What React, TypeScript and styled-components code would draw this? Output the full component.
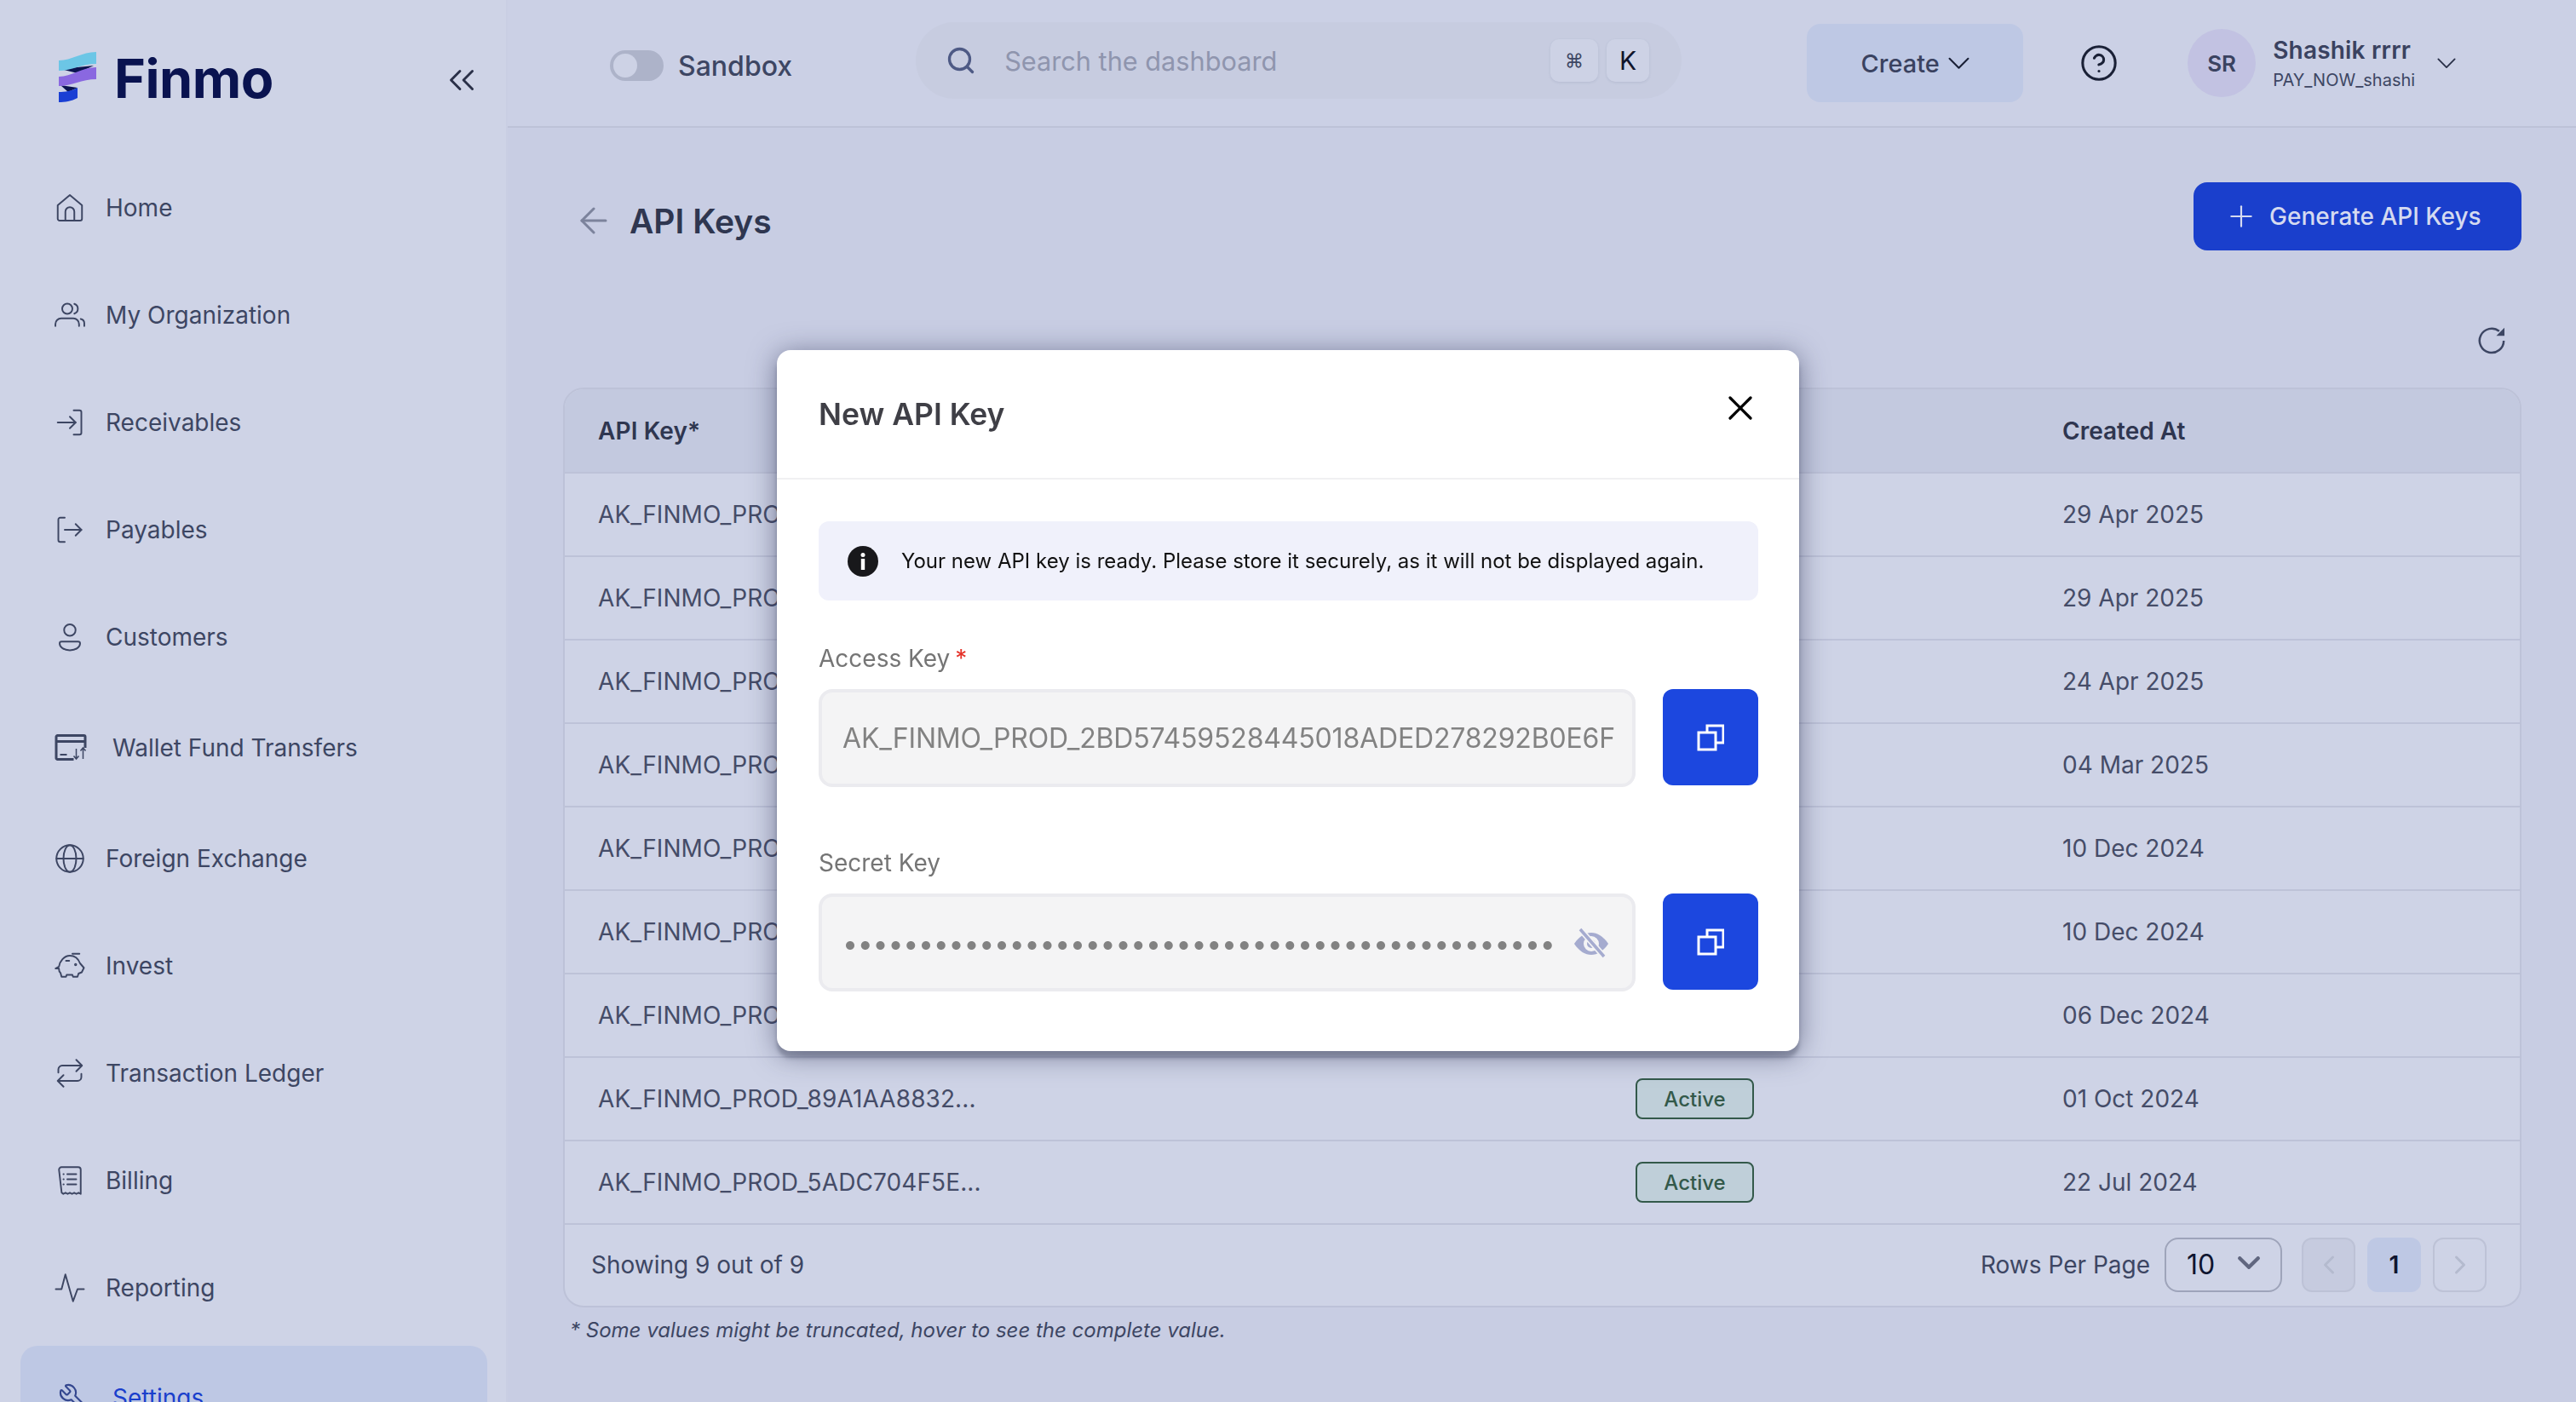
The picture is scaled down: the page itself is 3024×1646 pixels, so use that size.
import React from "react";
import styled, { createGlobalStyle } from "styled-components";
import { ArrowLeft, ChevronLeft, ChevronRight, ChevronsLeft, CircleHelp, Plus, Search, Wrench, X } from "lucide-react";

const GlobalStyle = createGlobalStyle`
  html, body {
    margin: 0;
    padding: 0;
    height: 100%;
    overflow: hidden;
    font-family: Inter, "Liberation Sans", sans-serif;
  }
  * {
    box-sizing: border-box;
  }
`;

const Page = styled.div`
  display: flex;
  width: 3024px;
  height: 1646px;
  overflow: hidden;
  background: #c8cde3;
  color: #3d4663;
`;

const Sidebar = styled.aside`
  flex: 0 0 596px;
  height: 1646px;
  overflow: hidden;
  background: #ced3e6;
  border-right: 2px solid #c9cee3;
`;

const LogoRow = styled.div`
  display: flex;
  align-items: center;
  height: 181px;
  padding: 0 27px 0 60px;
`;

const LogoText = styled.span`
  margin: 2px 0 0 4px;
  font-size: 63px;
  font-weight: 700;
  letter-spacing: -0.5px;
  color: #0a1350;
`;

const CollapseButton = styled.span`
  display: flex;
  margin: 6px 0 0 auto;
  color: #2a3048;
`;

const Nav = styled.nav`
  display: flex;
  flex-direction: column;
`;

const NavItem = styled.div<{ $active?: boolean; $tall?: boolean }>`
  display: flex;
  flex: none;
  align-items: center;
  gap: 24px;
  width: 548px;
  height: ${({ $active, $tall }) => ($active ? "122px" : $tall ? "134px" : "126px")};
  margin: ${({ $active }) => ($active ? "5px" : "0")} 0 0 24px;
  padding-left: 40px;
  border-radius: 20px;
  font-size: 28px;
  background: ${({ $active }) => ($active ? "#bec8e4" : "transparent")};
  color: ${({ $active }) => ($active ? "#1a3fcc" : "#3d4663")};
`;

const NavSvg = styled.svg.attrs({
  viewBox: "0 0 24 24",
  fill: "none",
  stroke: "currentColor",
  strokeWidth: 1.3,
  strokeLinecap: "round",
  strokeLinejoin: "round",
})`
  flex: none;
  width: 36px;
  height: 36px;
  color: #3d4663;
`;

const WalletSvg = styled.svg.attrs({ viewBox: "0 0 43 32", fill: "none", stroke: "currentColor" })`
  flex: none;
  width: 44px;
  height: 32px;
  color: #3d4663;
`;

const SettingsIcon = styled(Wrench)`
  flex: none;
  width: 44px;
  height: 36px;
  color: #34478f;
  transform: scaleX(-1);
`;

const Main = styled.main`
  display: flex;
  flex: 1;
  flex-direction: column;
  min-width: 0;
`;

const Header = styled.header`
  display: flex;
  flex: none;
  align-items: center;
  height: 150px;
  padding-left: 120px;
  background: #cbd0e5;
  border-bottom: 2px solid #bdc2d8;
`;

const SandboxToggle = styled.div`
  display: flex;
  align-items: center;
  gap: 17px;
  margin-top: 6px;
  font-size: 32px;
  font-weight: 500;
`;

const ToggleTrack = styled.span`
  display: flex;
  align-items: center;
  width: 63px;
  height: 36px;
  padding-left: 4px;
  border-radius: 18px;
  background: #adb3c9;
`;

const ToggleKnob = styled.span`
  width: 28px;
  height: 28px;
  border-radius: 50%;
  background: #cdd2e5;
`;

const SearchBox = styled.div`
  display: flex;
  align-items: center;
  width: 899px;
  height: 90px;
  margin: 0 0 6px 145px;
  padding: 0 38px 0 35px;
  border-radius: 45px;
  background: #c7cce0;
  color: #4e5a85;
`;

const Placeholder = styled.span`
  margin-left: 33px;
  font-size: 30.7px;
  color: #8f95ae;
`;

const KeyCap = styled.kbd<{ $wide?: boolean }>`
  display: flex;
  align-items: center;
  justify-content: center;
  width: ${({ $wide }) => ($wide ? "56px" : "50px")};
  height: 50px;
  margin-left: ${({ $wide }) => ($wide ? "auto" : "10px")};
  border-radius: 10px;
  background: #cdd2e5;
  box-shadow: 0 1px 3px rgba(60, 70, 110, 0.12);
  font-family: Inter, "DejaVu Sans", sans-serif;
  font-size: ${({ $wide }) => ($wide ? "22px" : "30px")};
  color: ${({ $wide }) => ($wide ? "#3d4663" : "#11152b")};
`;

const CreateButton = styled.button`
  display: flex;
  align-items: center;
  justify-content: center;
  gap: 10px;
  width: 254px;
  height: 92px;
  margin-left: 147px;
  border: none;
  border-radius: 16px;
  background: #bec8e4;
  font: inherit;
  font-size: 29px;
  font-weight: 500;
  color: #3a4260;
`;

const CreateCaret = styled.span`
  display: flex;
  color: #1a2036;
`;

const HelpButton = styled.span`
  display: flex;
  margin-left: 66px;
  color: #1a2036;
`;

const Avatar = styled.span`
  display: flex;
  align-items: center;
  justify-content: center;
  width: 80px;
  height: 80px;
  margin-left: 81px;
  border-radius: 50%;
  background: #c2c2e2;
  font-size: 26px;
  font-weight: 600;
  color: #3a4260;
`;

const UserBlock = styled.div`
  display: flex;
  flex-direction: column;
  gap: 5px;
  margin-left: 20px;
`;

const UserName = styled.span`
  font-size: 28px;
  font-weight: 600;
  line-height: 34px;
  letter-spacing: 0.2px;
  color: #3a4260;
`;

const UserOrg = styled.span`
  font-size: 20px;
  line-height: 26px;
  color: #3d4663;
`;

const UserCaret = styled.span`
  display: flex;
  margin-left: 26px;
  color: #2a3048;
`;

const Caret = styled.svg.attrs({
  viewBox: "0 0 24 14",
  fill: "none",
  stroke: "currentColor",
  strokeLinecap: "round",
  strokeLinejoin: "round",
})<{ $w: number }>`
  width: ${({ $w }) => $w}px;
  height: ${({ $w }) => Math.round(($w * 14) / 24)}px;
`;

const Content = styled.section`
  display: flex;
  flex: 1;
  flex-direction: column;
  padding: 64px 64px 0 65px;
`;

const TitleRow = styled.div`
  display: flex;
  align-items: center;
  justify-content: space-between;
`;

const TitleGroup = styled.div`
  display: flex;
  align-items: center;
  gap: 18px;
  margin: 10px 0 0 12px;
  color: #7c839c;
`;

const Title = styled.h1`
  margin: 0;
  font-size: 39px;
  font-weight: 600;
  color: #2f3650;
`;

const GenerateButton = styled.button`
  display: flex;
  align-items: center;
  gap: 13px;
  width: 385px;
  height: 80px;
  padding: 0 0 0 36px;
  border: none;
  border-radius: 16px;
  background: #1a3fcc;
  font: inherit;
  font-size: 28px;
  font-weight: 500;
  color: #d5daf0;
`;

const RefreshRow = styled.div`
  display: flex;
  justify-content: flex-end;
  margin-top: 86px;
  padding-right: 15px;
  color: #3d4663;
`;

const Table = styled.div`
  margin-top: 35px;
  overflow: hidden;
  border: 2px solid #bdc2d8;
  border-radius: 24px;
  background: #ced3e6;
`;

const columns = "1257px 501px 1fr";

const HeadRow = styled.div`
  display: grid;
  grid-template-columns: ${columns};
  align-items: center;
  height: 99px;
  background: #c3c9df;
  border-bottom: 2px solid #bdc2d8;
  font-size: 28px;
  font-weight: 600;
  color: #2f3650;
`;

const Row = styled.div`
  display: grid;
  grid-template-columns: ${columns};
  align-items: center;
  height: 98px;
  border-bottom: 2px solid #bdc2d8;
  font-size: 28px;
  color: #454c68;
`;

const KeyCell = styled.div`
  padding-left: 39px;
  letter-spacing: 0.1px;
`;

const Badge = styled.span`
  display: inline-flex;
  align-items: center;
  justify-content: center;
  width: 139px;
  height: 48px;
  border: 2px solid #33594a;
  border-radius: 8px;
  background: #bfcfd9;
  font-size: 24px;
  font-weight: 500;
  color: #33594a;
`;

const TableFooter = styled.div`
  display: flex;
  align-items: center;
  justify-content: space-between;
  height: 95px;
  padding: 0 39px 2px 31px;
  font-size: 28px;
  color: #3d4663;
`;

const FooterRight = styled.div`
  display: flex;
  align-items: center;
`;

const SelectBox = styled.div`
  display: flex;
  align-items: center;
  justify-content: space-between;
  width: 138px;
  height: 64px;
  margin-left: 17px;
  padding: 0 24px;
  border: 2px solid #9ea4ba;
  border-radius: 16px;
  font-size: 32px;
  color: #0f1530;
`;

const SelectCaret = styled.span`
  display: flex;
  margin-bottom: 4px;
  color: #60667f;
`;

const PageButton = styled.span<{ $current?: boolean; $muted?: boolean }>`
  display: flex;
  align-items: center;
  justify-content: center;
  width: 63px;
  height: 64px;
  border: 2px solid ${({ $current }) => ($current ? "transparent" : "#bdc2d6")};
  border-radius: 12px;
  background: ${({ $current, $muted }) => ($current ? "#bec8e4" : $muted ? "#c6cbdf" : "transparent")};
  font-weight: 600;
  color: ${({ $current }) => ($current ? "#0f1530" : "#b4bace")};
`;

const Pager = styled.div`
  display: flex;
  gap: 14px;
  margin-left: 23px;
`;

const Footnote = styled.p`
  margin: 12px 0 0 8px;
  font-size: 24px;
  font-style: italic;
  color: #3d4663;
`;

const Overlay = styled.div`
  position: fixed;
  inset: 0;
  display: flex;
  align-items: center;
  justify-content: center;
  padding-bottom: 1px;
`;

const Modal = styled.div`
  width: 1200px;
  height: 823px;
  border-radius: 16px;
  background: #fff;
  box-shadow: 0 8px 4px rgba(60, 65, 90, 0.35), 0 4px 32px rgba(40, 45, 80, 0.55);
`;

const ModalHeader = styled.div`
  display: flex;
  align-items: center;
  justify-content: space-between;
  height: 152px;
  padding: 0 45px 0 49px;
  border-bottom: 2px solid #f0f0f2;
`;

const ModalTitle = styled.h2`
  margin: 0;
  font-size: 35.5px;
  font-weight: 600;
  color: #3f3f46;
`;

const CloseButton = styled.span`
  display: flex;
  margin-bottom: 14px;
  color: #000;
`;

const ModalBody = styled.div`
  padding: 49px 48px 0 49px;
`;

const InfoBox = styled.div`
  display: flex;
  align-items: center;
  gap: 27px;
  height: 93px;
  margin-bottom: 51px;
  padding-left: 34px;
  border-radius: 12px;
  background: #f0f1fb;
  font-size: 24px;
  white-space: nowrap;
  color: #111;
`;

const Field = styled.div`
  margin-bottom: 72px;
`;

const FieldLabel = styled.label`
  display: block;
  height: 34px;
  margin-bottom: 19px;
  font-size: 28px;
  line-height: 34px;
  color: #757575;
`;

const Required = styled.span`
  margin-left: 6px;
  color: #e5332a;
`;

const FieldRow = styled.div`
  display: flex;
  align-items: flex-start;
  gap: 32px;
`;

const ValueBox = styled.div`
  display: flex;
  flex: 1;
  align-items: center;
  justify-content: space-between;
  height: 115px;
  padding: 0 26px 0 24px;
  overflow: hidden;
  border: 4px solid #ebebef;
  border-radius: 16px;
  background: #f4f4f5;
  font-size: 32px;
  letter-spacing: -0.17px;
  white-space: nowrap;
  color: #828282;
`;

const Dots = styled.span`
  margin-top: 2px;
  letter-spacing: -0.2px;
`;

const CopyButton = styled.button`
  display: flex;
  align-items: center;
  justify-content: center;
  flex: none;
  width: 112px;
  height: 113px;
  border: none;
  border-radius: 12px;
  background: #1c47df;
  color: #fff;
`;

const navItems = [
  { label: "Home", icon: <NavSvg><path d="M2.500 10 12 2l9.500 8v10.500a1.500 1.500 0 0 1-1.500 1.500H4a1.500 1.500 0 0 1-1.500-1.500z" /><path d="M8.500 22v-7a3.500 3.500 0 0 1 7 0v7" /></NavSvg> },
  { label: "My Organization", icon: <NavSvg><circle cx="10" cy="7" r="4" /><path d="M15.500 3.200a4 4 0 0 1 0 7.600" /><path d="M.7 20.500V19a4.500 4.500 0 0 1 4.500-4.500h9.500a4.500 4.500 0 0 1 4.500 4.500v1.500" /><path d="M20.500 15a3.500 3.500 0 0 1 2.800 3.500v2" /></NavSvg> },
  { label: "Receivables", icon: <NavSvg><path d="M2.500 12h14" /><path d="M12 7.500l4.500 4.500-4.500 4.500" /><path d="M15 2.500h4.500a1.500 1.500 0 0 1 1.500 1.500v16a1.500 1.500 0 0 1-1.500 1.500H15" /></NavSvg> },
  { label: "Payables", icon: <NavSvg><path d="M8 2.500H4.500A1.500 1.500 0 0 0 3 4v16a1.500 1.500 0 0 0 1.500 1.500H8" /><path d="M8 12h13" /><path d="M16.500 7.500 21 12l-4.500 4.500" /></NavSvg> },
  { label: "Customers", icon: <NavSvg strokeWidth={1.5}><circle cx="12" cy="6.500" r="4.500" /><path d="M5.500 15.500h13a1.500 1.500 0 0 1 1.500 1.500c0 3-3.500 5.300-8 5.300S4 20 4 17a1.500 1.500 0 0 1 1.500-1.500z" /></NavSvg> },
  {
    label: "Wallet Fund Transfers",
    tall: true,
    icon: (
      <WalletSvg>
        <path d="M22 29.500H3a1.500 1.500 0 0 1-1.500-1.500V3A1.500 1.500 0 0 1 3 1.500h31a1.500 1.500 0 0 1 1.500 1.500v13" strokeWidth="3" />
        <path d="M2 8.500h33" strokeWidth="3" />
        <path d="M6 24h8" strokeWidth="2" />
        <path d="M25 17v12M22 25.500l3 3.500 3-3.500M33 29V16M30 19.500l3-3.500 3 3.500" strokeWidth="1.500" />
      </WalletSvg>
    ),
  },
  { label: "Foreign Exchange", icon: <NavSvg><circle cx="12" cy="12" r="10.500" /><ellipse cx="12" cy="12" rx="5" ry="10.500" /><path d="M1.500 12h21" /></NavSvg> },
  { label: "Invest", icon: <NavSvg strokeWidth={1.4} color="#22283f"><path d="M.8 14l2.700-1.500C4 8.500 7.500 4 12 4c3.500 0 6.500 2 8 6l3 3.500-1.700 3.500-2.500 1-.8 2.500h-3.500l-.5-1.500H9.500L9 20.500H5.500L4.700 17.500c-1-.8-1.300-2-1.300-3.500z" /><path d="M9 8h2.500M14 2.500h5.500" /><circle cx="16.500" cy="11" r=".5" /></NavSvg> },
  { label: "Transaction Ledger", icon: <NavSvg><path d="M3 11.500V9a3 3 0 0 1 3-3h15" /><path d="M17 1.500 21.500 6 17 10.500" /><path d="M21 12.500V15a3 3 0 0 1-3 3H3" /><path d="M7 22.500 2.500 18 7 13.500" /></NavSvg> },
  { label: "Billing", icon: <NavSvg><path d="M3.500 3.500a2 2 0 0 1 2-2h13a2 2 0 0 1 2 2v19l-1.700-1-1.700 1-1.700-1-1.700 1-1.700-1-1.700 1-1.700-1-1.700 1-1.300-1z" /><path d="M10 7h7M10 11h7M10 15h7M7 7h.2M7 11h.2M7 15h.2" /></NavSvg> },
  { label: "Reporting", icon: <NavSvg><path d="M1 13h4.500L8.500 1.500l6 21 3.500-9.500h5" /></NavSvg> },
  { label: "Settings", active: true, icon: <SettingsIcon strokeWidth={1.4} /> },
];

const rows = [
  { key: "AK_FINMO_PROD_...", date: "29 Apr 2025" },
  { key: "AK_FINMO_PROD_...", date: "29 Apr 2025" },
  { key: "AK_FINMO_PROD_...", date: "24 Apr 2025" },
  { key: "AK_FINMO_PROD_...", date: "04 Mar 2025" },
  { key: "AK_FINMO_PROD_...", date: "10 Dec 2024" },
  { key: "AK_FINMO_PROD_...", date: "10 Dec 2024" },
  { key: "AK_FINMO_PROD_...", date: "06 Dec 2024" },
  { key: "AK_FINMO_PROD_89A1AA8832...", date: "01 Oct 2024" },
  { key: "AK_FINMO_PROD_5ADC704F5E...", date: "22 Jul 2024" },
];

const LogoMark = () => (
  <svg width="70" height="75" viewBox="0 0 70 75">
    <path d="M11 28 50 24 31 33z" fill="#0b1450" />
    <path d="M11 47 31 50 20 55z" fill="#0b1450" />
    <path d="M9 18C24 18 36 8 53 8V22C36 22 24 30 9 30z" fill="#6cc6e6" />
    <path d="M9 37C24 37 36 26 53 26V40C36 40 24 48 9 48z" fill="#8a68e0" />
    <path d="M9 55C16 55 24 54 31 50V62C24 66 16 67 9 67z" fill="#1a3fd4" />
  </svg>
);

const CopyIcon = () => (
  <svg width="32" height="32" viewBox="0 0 32 32" fill="none" stroke="currentColor" strokeWidth="3">
    <path d="M12 10V2h19v20h-9" />
    <rect x="2" y="10" width="20" height="20" />
  </svg>
);

const EyeOffIcon = () => (
  <svg width="44" height="36" viewBox="0 0 44 36">
    <path d="M2 19C8 10 15 6 22 6s14 4 20 13c-6 9-13 13-20 13S8 28 2 19z" fill="#a5abcf" />
    <circle cx="22" cy="19" r="7" fill="none" stroke="#f4f4f5" strokeWidth="4" />
    <path d="M9 2l28 32" stroke="#f4f4f5" strokeWidth="7" />
    <path d="M9 2l28 32" stroke="#a5abcf" strokeWidth="3.500" />
  </svg>
);

const InfoIcon = () => (
  <svg width="36" height="36" viewBox="0 0 36 36" style={{ flex: "none" }}>
    <circle cx="18" cy="18" r="18" fill="#18181b" />
    <circle cx="18" cy="10.500" r="2.500" fill="#fff" />
    <rect x="15.800" y="15" width="4.400" height="13" fill="#fff" />
  </svg>
);

const RefreshIcon = () => (
  <svg width="40" height="40" viewBox="0 0 24 24" fill="none" stroke="currentColor" strokeWidth="1.500">
    <path d="M20.500 12a8.500 8.500 0 1 1-3.200-6.700" />
    <path d="M21 2.800V8.500h-5.700z" fill="currentColor" stroke="none" />
  </svg>
);

const App: React.FC = () => {
  return (
    <Page>
      <GlobalStyle />
      <Sidebar>
        <LogoRow>
          <LogoMark />
          <LogoText>Finmo</LogoText>
          <CollapseButton>
            <ChevronsLeft size={50} strokeWidth={1.4} />
          </CollapseButton>
        </LogoRow>
        <Nav>
          {navItems.map((item) => (
            <NavItem key={item.label} $active={item.active} $tall={item.tall}>
              {item.icon}
              {item.label}
            </NavItem>
          ))}
        </Nav>
      </Sidebar>
      <Main>
        <Header>
          <SandboxToggle>
            <ToggleTrack>
              <ToggleKnob />
            </ToggleTrack>
            Sandbox
          </SandboxToggle>
          <SearchBox>
            <Search size={36} strokeWidth={2.2} />
            <Placeholder>Search the dashboard</Placeholder>
            <KeyCap $wide>⌘</KeyCap>
            <KeyCap>K</KeyCap>
          </SearchBox>
          <CreateButton>
            Create
            <CreateCaret>
              <Caret $w={25} strokeWidth={2}>
                <path d="M1.500 1.500 12 12 22.500 1.500" />
              </Caret>
            </CreateCaret>
          </CreateButton>
          <HelpButton>
            <CircleHelp size={46} strokeWidth={1.6} />
          </HelpButton>
          <Avatar>SR</Avatar>
          <UserBlock>
            <UserName>Shashik rrrr</UserName>
            <UserOrg>PAY_NOW_shashi</UserOrg>
          </UserBlock>
          <UserCaret>
            <Caret $w={22} strokeWidth={2}>
              <path d="M1.500 1.500 12 12 22.500 1.500" />
            </Caret>
          </UserCaret>
        </Header>
        <Content>
          <TitleRow>
            <TitleGroup>
              <ArrowLeft size={48} strokeWidth={1.5} />
              <Title>API Keys</Title>
            </TitleGroup>
            <GenerateButton>
              <Plus size={40} strokeWidth={1.3} />
              Generate API Keys
            </GenerateButton>
          </TitleRow>
          <RefreshRow>
            <RefreshIcon />
          </RefreshRow>
          <Table>
            <HeadRow>
              <KeyCell>API Key*</KeyCell>
              <div>Status</div>
              <div>Created At</div>
            </HeadRow>
            {rows.map((row, i) => (
              <Row key={i}>
                <KeyCell>{row.key}</KeyCell>
                <div>
                  <Badge>Active</Badge>
                </div>
                <div>{row.date}</div>
              </Row>
            ))}
            <TableFooter>
              <span>Showing 9 out of 9</span>
              <FooterRight>
                Rows Per Page
                <SelectBox>
                  10
                  <SelectCaret>
                    <Caret $w={26} strokeWidth={4}>
                      <path d="M2 2 12 12 22 2" />
                    </Caret>
                  </SelectCaret>
                </SelectBox>
                <Pager>
                  <PageButton $muted>
                    <ChevronLeft size={36} strokeWidth={2} />
                  </PageButton>
                  <PageButton $current>1</PageButton>
                  <PageButton>
                    <ChevronRight size={36} strokeWidth={2} />
                  </PageButton>
                </Pager>
              </FooterRight>
            </TableFooter>
          </Table>
          <Footnote>* Some values might be truncated, hover to see the complete value.</Footnote>
        </Content>
      </Main>
      <Overlay>
        <Modal>
          <ModalHeader>
            <ModalTitle>New API Key</ModalTitle>
            <CloseButton>
              <X size={48} strokeWidth={1.6} />
            </CloseButton>
          </ModalHeader>
          <ModalBody>
            <InfoBox>
              <InfoIcon />
              Your new API key is ready. Please store it securely, as it will not be displayed again.
            </InfoBox>
            <Field>
              <FieldLabel>
                Access Key<Required>*</Required>
              </FieldLabel>
              <FieldRow>
                <ValueBox>AK_FINMO_PROD_2BD57459528445018ADED278292B0E6F</ValueBox>
                <CopyButton>
                  <CopyIcon />
                </CopyButton>
              </FieldRow>
            </Field>
            <Field>
              <FieldLabel>Secret Key</FieldLabel>
              <FieldRow>
                <ValueBox>
                  <Dots>{"•".repeat(47)}</Dots>
                  <EyeOffIcon />
                </ValueBox>
                <CopyButton>
                  <CopyIcon />
                </CopyButton>
              </FieldRow>
            </Field>
          </ModalBody>
        </Modal>
      </Overlay>
    </Page>
  );
};

export default App;
